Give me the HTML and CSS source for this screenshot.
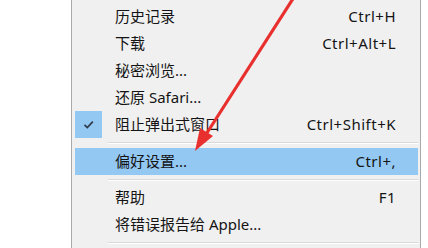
FILE: index.html
```html
<!DOCTYPE html>
<html lang="zh-CN">
<head>
<meta charset="utf-8">
<title>Safari 菜单</title>
<link rel="stylesheet" href="styles.css">
</head>
<body>
<div class="menu">
  <div class="item"><span class="gutter"></span><span class="label">历史记录</span><span class="key">Ctrl+H</span></div>
  <div class="item"><span class="gutter"></span><span class="label">下载</span><span class="key">Ctrl+Alt+L</span></div>
  <div class="item"><span class="gutter"></span><span class="label">秘密浏览...</span><span class="key"></span></div>
  <div class="item"><span class="gutter"></span><span class="label">还原 Safari...</span><span class="key"></span></div>
  <div class="item"><span class="gutter checked"><svg viewBox="0 0 27 27" width="27" height="27"><path d="M9.5 13.8 L12.3 16.6 L17.8 10.6" fill="none" stroke="#2f3b4a" stroke-width="1.7"/></svg></span><span class="label">阻止弹出式窗口</span><span class="key">Ctrl+Shift+K</span></div>
  <div class="sep"></div>
  <div class="item active"><span class="gutter"></span><span class="label">偏好设置...</span><span class="key">Ctrl+,</span></div>
  <div class="sep sep2"></div>
  <div class="item"><span class="gutter"></span><span class="label">帮助</span><span class="key">F1</span></div>
  <div class="item"><span class="gutter"></span><span class="label">将错误报告给 Apple...</span><span class="key"></span></div>
  <div class="sep"></div>
</div>
<svg class="arrow" viewBox="0 0 428 248" width="428" height="248">
  <line x1="296" y1="-6" x2="205" y2="136" stroke="#e8302e" stroke-width="3.2" stroke-linecap="round"/>
  <polygon points="195,151 213,136 200,128" fill="#e8302e"/>
</svg>
</body>
</html>
```

FILE: styles.css
```css
html, body {
  margin: 0;
  padding: 0;
  background: #ffffff;
}
body {
  width: 428px;
  height: 248px;
  overflow: hidden;
  position: relative;
  font-family: "Noto Sans", "Noto Sans CJK SC", sans-serif;
  font-size: 15px;
  color: #141414;
}
.menu {
  box-sizing: border-box;
  margin-left: 71px;
  width: 350px;
  height: 248px;
  background: #f0f0f0;
  border-left: 1px solid #a9a9a9;
  border-right: 1px solid #a9a9a9;
  padding: 3px 2px 0 3px;
  display: flex;
  flex-direction: column;
}
.item {
  display: grid;
  grid-template-columns: 27px 1fr auto;
  column-gap: 13px;
  align-items: center;
  height: 27px;
  line-height: 27px;
  padding-right: 22px;
  white-space: nowrap;
}
.item.active {
  background: #93c8f3;
}
.gutter {
  width: 27px;
  height: 27px;
  display: flex;
}
.gutter.checked {
  background: #93c8f3;
}
.key {
  text-align: right;
  letter-spacing: 0.5px;
}
.sep {
  height: 10px;
  display: flex;
  flex-direction: column;
  justify-content: center;
  margin-left: 33px;
}
.sep::before {
  content: "";
  display: block;
  height: 1px;
  background: #d9d9d9;
}
.sep::after {
  content: "";
  display: block;
  height: 1px;
  background: #ffffff;
}
.sep2 {
  height: 9px;
}
.arrow {
  position: absolute;
  left: 0;
  top: 0;
  pointer-events: none;
}
```
